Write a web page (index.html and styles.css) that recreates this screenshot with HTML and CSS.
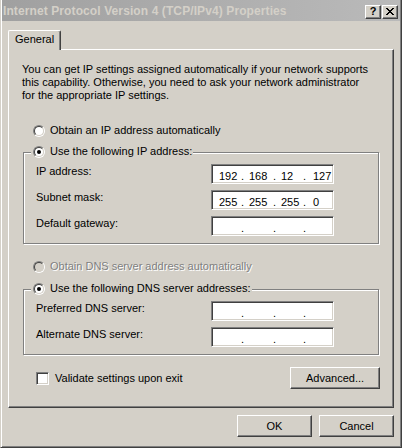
FILE: index.html
```
<!DOCTYPE html>
<html>
<head>
<meta charset="utf-8">
<title>Internet Protocol Version 4 (TCP/IPv4) Properties</title>
<link rel="stylesheet" href="styles.css">
</head>
<body>
<div class="window">
  <div class="titlebar">
    <span class="title">Internet Protocol Version 4 (TCP/IPv4) Properties</span>
    <div class="caption-btns">
      <span class="cap-btn help">?</span>
      <span class="cap-btn close"><svg width="8" height="7" viewBox="0 0 8 7" shape-rendering="crispEdges"><path fill="#000" d="M0 0h2v1H0z M6 0h2v1H6z M1 1h2v1H1z M5 1h2v1H5z M2 2h4v1H2z M3 3h2v1H3z M2 4h4v1H2z M1 5h2v1H1z M5 5h2v1H5z M0 6h2v1H0z M6 6h2v1H6z"/></svg></span>
    </div>
  </div>
  <div class="body">
    <div class="tabstrip"><div class="tab">General</div></div>
    <div class="panel">
      <p class="intro">You can get IP settings assigned automatically if your network supports<br>this capability. Otherwise, you need to ask your network administrator<br>for the appropriate IP settings.</p>

      <div class="option opt-auto-ip"><span class="radio"><span class="radio-in"></span></span><span>Obtain an IP address automatically</span></div>

      <div class="group group-ip">
        <div class="legend"><span class="radio"><span class="radio-in"><span class="dot"></span></span></span><span>Use the following IP address:</span></div>
        <div class="field-row"><span class="field-label">IP address:</span>
          <div class="ipbox"><span class="oct o1">192</span><span class="sep">.</span><span class="oct o2">168</span><span class="sep">.</span><span class="oct o3">12</span><span class="sep s3">.</span><span class="oct o4">127</span></div>
        </div>
        <div class="field-row"><span class="field-label">Subnet mask:</span>
          <div class="ipbox"><span class="oct o1">255</span><span class="sep">.</span><span class="oct o2">255</span><span class="sep">.</span><span class="oct o3">255</span><span class="sep s3">.</span><span class="oct o4">0</span></div>
        </div>
        <div class="field-row"><span class="field-label">Default gateway:</span>
          <div class="ipbox"><span class="oct o1"></span><span class="sep">.</span><span class="oct o2"></span><span class="sep">.</span><span class="oct o3"></span><span class="sep s3">.</span><span class="oct o4"></span></div>
        </div>
      </div>

      <div class="option opt-dns-auto disabled"><span class="radio"><span class="radio-in"></span></span><span>Obtain DNS server address automatically</span></div>

      <div class="group group-dns">
        <div class="legend"><span class="radio"><span class="radio-in"><span class="dot"></span></span></span><span>Use the following DNS server addresses:</span></div>
        <div class="field-row"><span class="field-label">Preferred DNS server:</span>
          <div class="ipbox"><span class="oct o1"></span><span class="sep">.</span><span class="oct o2"></span><span class="sep">.</span><span class="oct o3"></span><span class="sep s3">.</span><span class="oct o4"></span></div>
        </div>
        <div class="field-row"><span class="field-label">Alternate DNS server:</span>
          <div class="ipbox"><span class="oct o1"></span><span class="sep">.</span><span class="oct o2"></span><span class="sep">.</span><span class="oct o3"></span><span class="sep s3">.</span><span class="oct o4"></span></div>
        </div>
      </div>

      <div class="bottom-row">
        <div class="check-wrap"><span class="checkbox"></span><span>Validate settings upon exit</span></div>
        <button class="btn btn-adv">Advanced...</button>
      </div>
    </div>
    <div class="dialog-buttons">
      <button class="btn">OK</button>
      <button class="btn">Cancel</button>
    </div>
  </div>
</div>
</body>
</html>
```

FILE: styles.css
```
html, body {
  margin: 0;
  padding: 0;
  background: #d4d0c8;
}

body {
  font-family: "Liberation Sans", Arial, sans-serif;
  font-size: 11px;
  color: #000;
}

.window {
  width: 402px;
  height: 448px;
  box-sizing: border-box;
  background: #d4d0c8;
  border-left: 1px solid #d4d0c8;
  border-right: 1px solid #404040;
  border-bottom: 1px solid #404040;
  box-shadow: inset 1px 0 #fff, inset -1px -1px #808080;
  display: flex;
  flex-direction: column;
}

.titlebar {
  height: 21px;
  margin: 0 1px;
  padding: 0 2px 0 1px;
  display: flex;
  justify-content: space-between;
  align-items: flex-start;
  background: linear-gradient(to right, #a0a0a0, #bababa);
}

.title {
  font-weight: bold;
  font-size: 12px;
  letter-spacing: 0.1px;
  color: #d4d0c8;
  line-height: 13px;
  margin-top: 5px;
  white-space: nowrap;
}

.caption-btns {
  display: flex;
  gap: 1px;
  margin-top: 5px;
}

.cap-btn {
  width: 16px;
  height: 14px;
  box-sizing: border-box;
  border: 1px solid;
  border-color: #fff #404040 #404040 #fff;
  box-shadow: inset -1px -1px #808080;
  background: #d4d0c8;
  display: flex;
  align-items: center;
  justify-content: center;
}

.help {
  font-weight: bold;
  font-size: 11px;
  line-height: 11px;
  padding-bottom: 1px;
}

.close svg {
  display: block;
  margin-bottom: 1px;
}

.body {
  flex: 1;
  padding: 9px 7px 0 7px;
  display: flex;
  flex-direction: column;
}

.tabstrip {
  display: flex;
}

.tab {
  position: relative;
  z-index: 1;
  width: 53px;
  box-sizing: border-box;
  padding: 2px 0 4px 6px;
  line-height: 13px;
  border-top: 1px solid #fff;
  border-left: 1px solid #fff;
  border-right: 1px solid #404040;
  box-shadow: inset -1px 0 #808080;
  border-radius: 2px 2px 0 0;
  background: #d4d0c8;
  margin-bottom: -1px;
}

.panel {
  border: 1px solid;
  border-color: #fff #404040 #404040 #fff;
  box-shadow: inset -1px -1px #808080;
  padding: 13px 0 18px 13px;
}

.intro {
  margin: 0;
  line-height: 13px;
  white-space: nowrap;
}

.option {
  display: flex;
  align-items: center;
  gap: 5px;
  height: 13px;
  line-height: 13px;
  margin-left: 11px;
}

.opt-auto-ip {
  margin-top: 22px;
}

.opt-dns-auto {
  margin-top: 16px;
}

.disabled {
  color: #808080;
}

.disabled > span:last-child {
  text-shadow: 1px 1px #fff;
}

.radio {
  width: 12px;
  height: 12px;
  box-sizing: border-box;
  border-radius: 50%;
  border: 1px solid;
  border-color: #808080 #fff #fff #808080;
  flex: none;
}

.radio-in {
  display: flex;
  width: 10px;
  height: 10px;
  box-sizing: border-box;
  border-radius: 50%;
  border: 1px solid;
  border-color: #404040 #d4d0c8 #d4d0c8 #404040;
  background: #fff;
  align-items: center;
  justify-content: center;
}

.disabled .radio-in {
  background: #d4d0c8;
}

.dot {
  width: 4px;
  height: 4px;
  border-radius: 50%;
  background: #000;
}

.group {
  width: 356px;
  box-sizing: border-box;
  margin-left: 1px;
  border: 1px solid #808080;
  box-shadow: inset 1px 1px #fff, 1px 1px #fff;
  padding: 0 0 7px 12px;
  display: flex;
  flex-direction: column;
}

.group-ip {
  margin-top: 15px;
}

.group-dns {
  margin-top: 16px;
}

.legend {
  display: flex;
  align-items: center;
  gap: 5px;
  height: 13px;
  line-height: 13px;
  margin: -8px 0 6px -5px;
  padding: 0 1px 0 2px;
  background: #d4d0c8;
  align-self: flex-start;
}

.field-row {
  display: flex;
  height: 20px;
}

.field-row + .field-row {
  margin-top: 6px;
}

.field-label {
  width: 175px;
  flex: none;
  line-height: 13px;
  padding-top: 1px;
}

.ipbox {
  width: 123px;
  height: 20px;
  box-sizing: border-box;
  border: 1px solid;
  border-color: #808080 #fff #fff #808080;
  box-shadow: inset 1px 1px #404040, inset -1px -1px #d4d0c8;
  background: #fff;
  display: flex;
  padding: 5px 0 0 7px;
  line-height: 13px;
}

.oct {
  width: 22px;
  flex: none;
}

.o2 {
  width: 24px;
}

.sep {
  width: 8px;
  flex: none;
}

.s3 {
  width: 10px;
}

.bottom-row {
  display: flex;
  align-items: center;
  justify-content: space-between;
  width: 358px;
  margin-top: 12px;
}

.check-wrap {
  display: flex;
  align-items: center;
  gap: 6px;
  margin-left: 14px;
  line-height: 13px;
}

.checkbox {
  width: 13px;
  height: 13px;
  box-sizing: border-box;
  border: 1px solid;
  border-color: #808080 #fff #fff #808080;
  box-shadow: inset 1px 1px #404040, inset -1px -1px #d4d0c8;
  background: #fff;
  flex: none;
}

.btn {
  height: 22px;
  font: inherit;
  color: #000;
  line-height: 13px;
  border: 1px solid;
  border-color: #fff #404040 #404040 #fff;
  box-shadow: inset -1px -1px #808080;
  background: #d4d0c8;
  padding: 0;
  border-radius: 0;
}

.btn-adv {
  width: 90px;
}

.dialog-buttons {
  display: flex;
  justify-content: flex-end;
  gap: 7px;
  margin-top: 7px;
}

.dialog-buttons .btn {
  width: 75px;
}
```
